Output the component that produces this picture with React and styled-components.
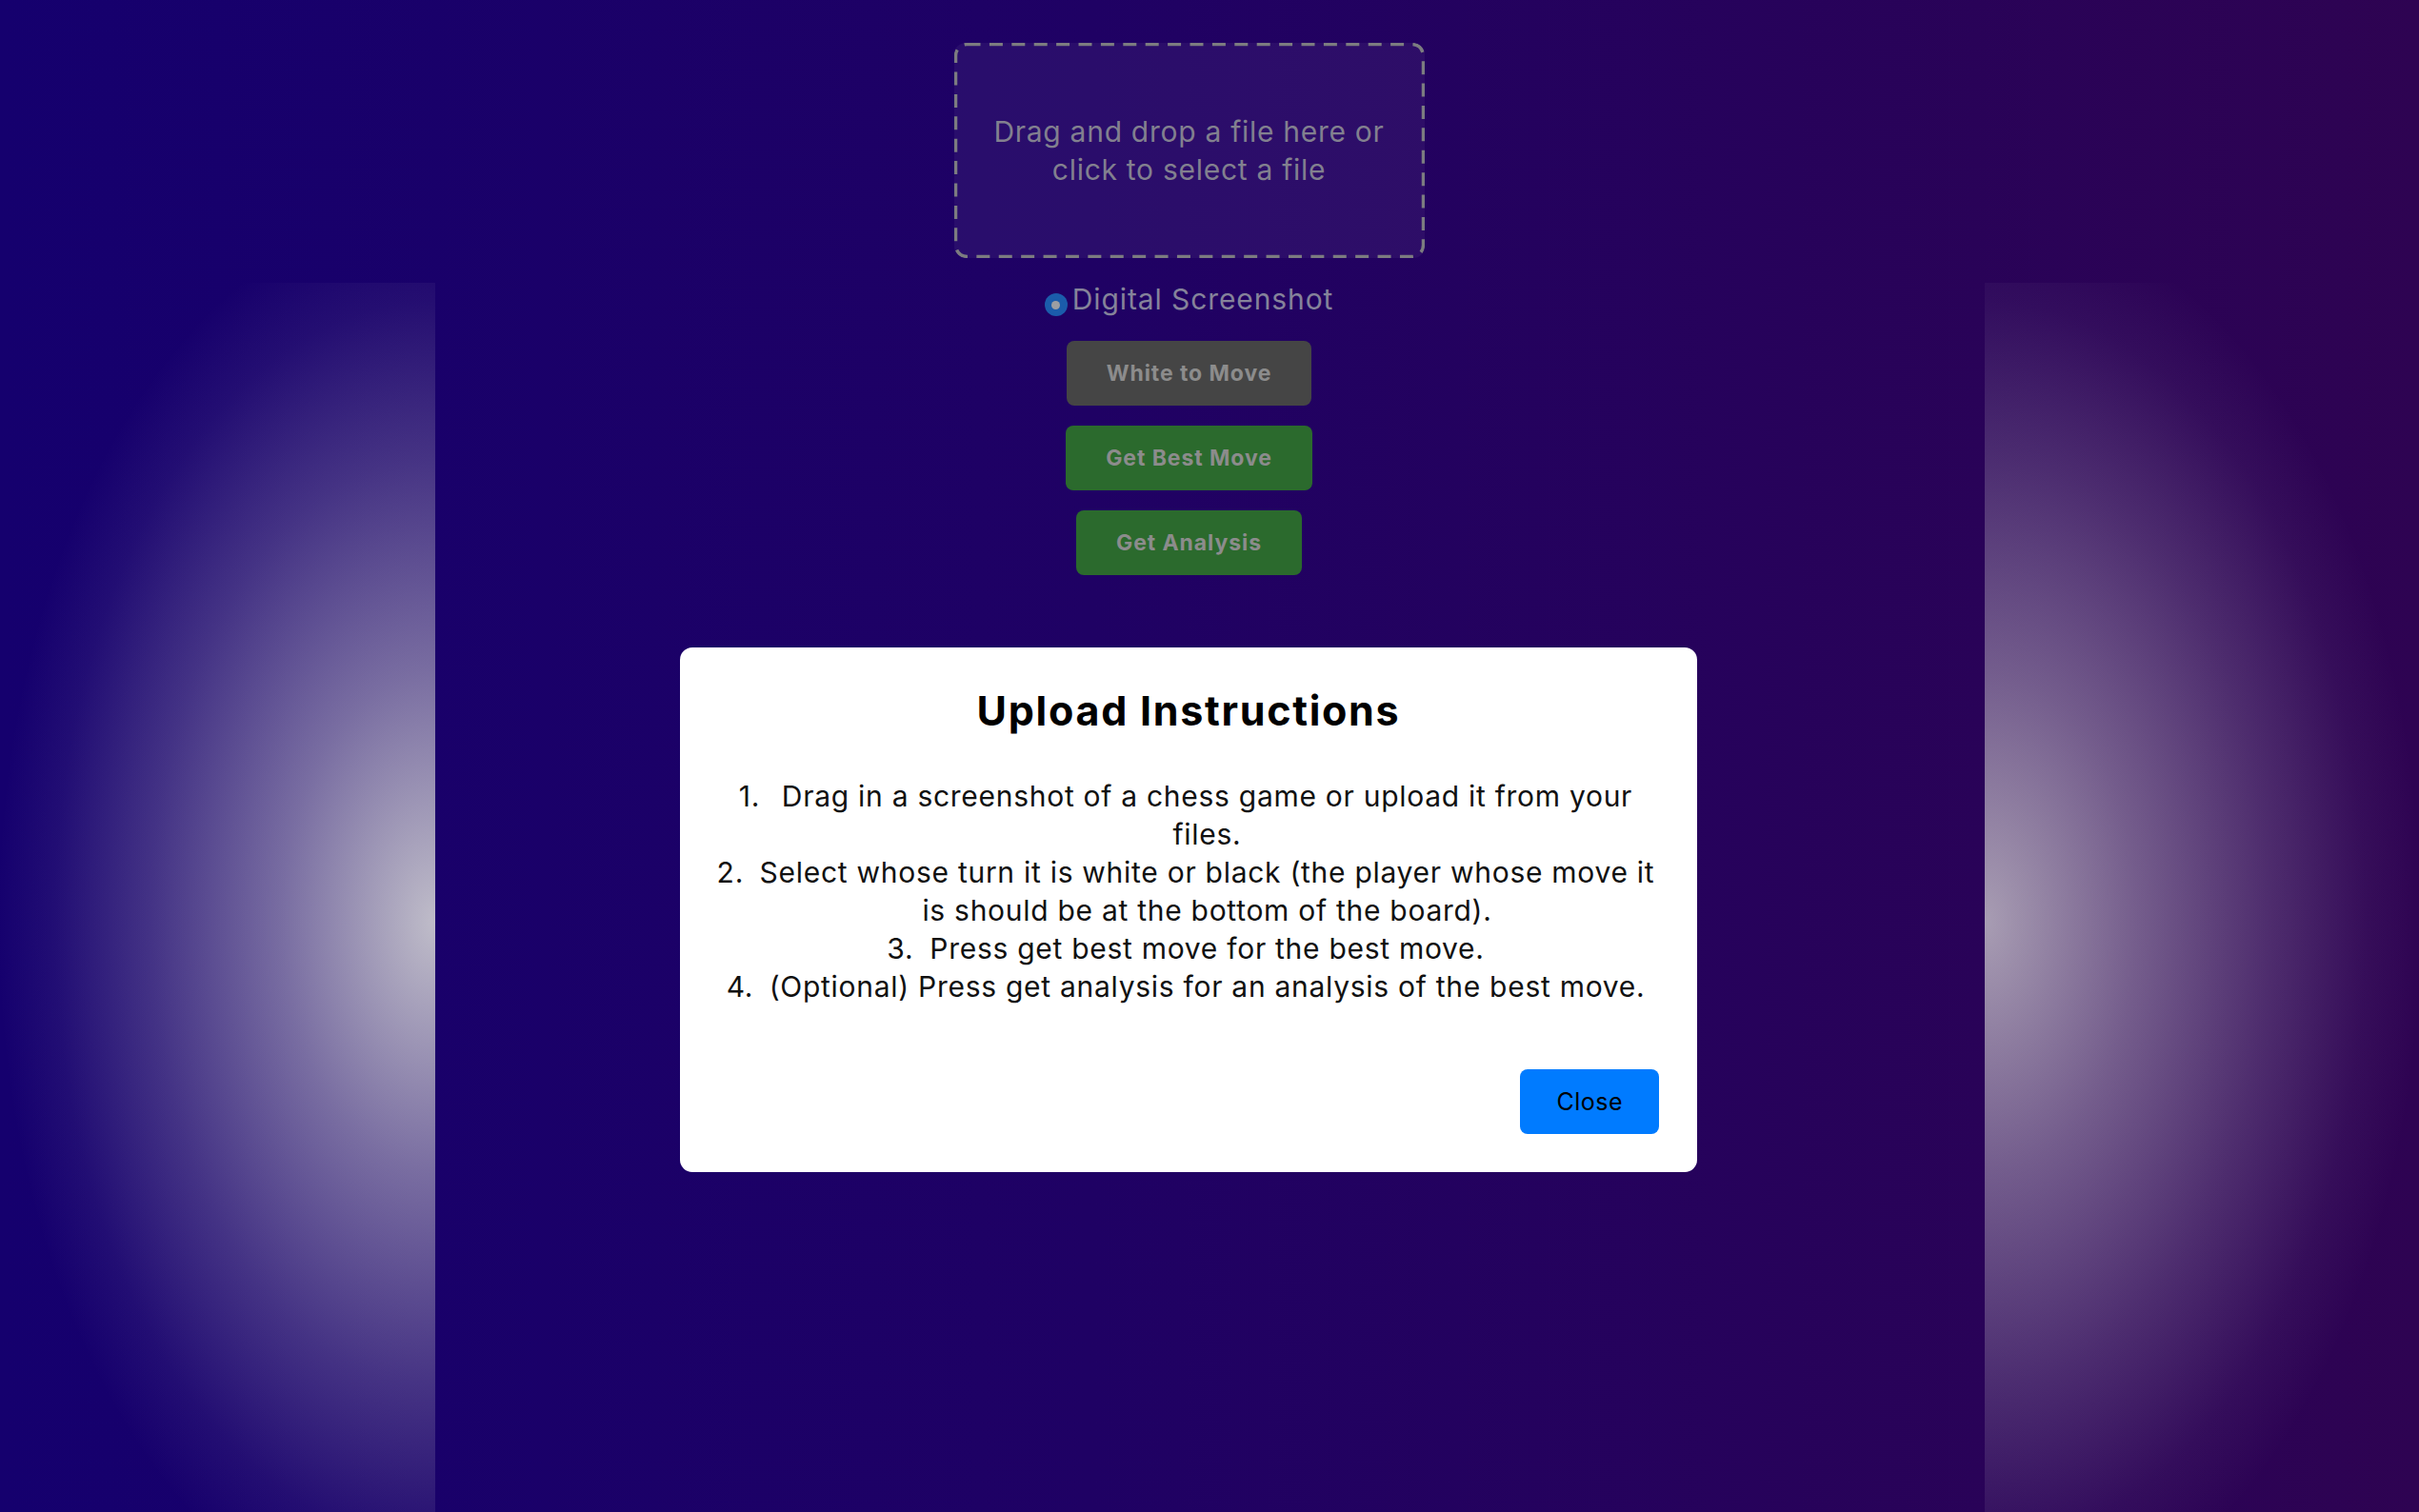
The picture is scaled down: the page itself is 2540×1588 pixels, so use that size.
import React from 'react';
import styled, { createGlobalStyle } from 'styled-components';

const GlobalStyle = createGlobalStyle`
  html, body {
    margin: 0;
    height: 100%;
  }

  body {
    font-family: Inter, "Noto Sans", sans-serif;
    letter-spacing: 0.045em;
    background: linear-gradient(90deg, #15006e 0%, #1f0164 45%, #2e0352 100%);
    overflow: hidden;
  }

  #root {
    height: 100%;
  }
`;

// dashed outline drawn to match the longer dashes of the original drop zone
const dashOutline =
  "url(\"data:image/svg+xml,%3Csvg xmlns='http://www.w3.org/2000/svg' width='494' height='226'%3E%3Crect x='1.5' y='1.5' width='491' height='223' rx='12' fill='none' stroke='%237c7c80' stroke-width='3.5' stroke-dasharray='14 9.4'/%3E%3C/svg%3E\")";

const Page = styled.div`
  display: grid;
  grid-template-columns: 457px 1fr 456px;
  height: 100vh;
`;

const SideGlow = styled.div`
  margin-top: 297px;
  background: radial-gradient(
    ellipse 460px 750px at ${(p) => (p.$side === 'left' ? '100%' : '0%')} 52%,
    rgba(228, 230, 222, ${(p) => p.$strength}) 0%,
    rgba(228, 230, 222, ${(p) => p.$strength * 0.58}) 35%,
    rgba(228, 230, 222, ${(p) => p.$strength * 0.27}) 65%,
    rgba(228, 230, 222, ${(p) => p.$strength * 0.07}) 87%,
    rgba(228, 230, 222, 0) 100%
  );
`;

const Main = styled.main`
  display: flex;
  flex-direction: column;
  align-items: center;
  padding: 45px 44px 0 0;
`;

const DropZone = styled.div`
  box-sizing: border-box;
  width: 494px;
  height: 226px;
  padding: 0 28px;
  display: flex;
  align-items: center;
  justify-content: center;
  text-align: center;
  border-radius: 12px;
  background: ${dashOutline}, rgba(255, 255, 255, 0.05);
  color: #82808f;
  font-size: 30px;
  line-height: 40px;
  cursor: pointer;
`;

const RadioRow = styled.label`
  display: flex;
  align-items: flex-end;
  gap: 5px;
  margin-top: 25px;
  color: #85839a;
  font-size: 30px;
  line-height: 36px;
  letter-spacing: 0.03em;
`;

const RadioDot = styled.span`
  box-sizing: border-box;
  width: 24px;
  height: 24px;
  border-radius: 50%;
  background: #1b5cab;
  display: flex;
  align-items: center;
  justify-content: center;

  &::after {
    content: '';
    width: 9px;
    height: 9px;
    border-radius: 50%;
    background: #9c9ea2;
  }
`;

const ButtonStack = styled.div`
  display: flex;
  flex-direction: column;
  align-items: center;
  gap: 21px;
  margin-top: 26px;
`;

const ActionButton = styled.button`
  height: 68px;
  padding: 0 42px;
  border: none;
  border-radius: 8px;
  background: ${(p) => (p.$variant === 'gray' ? '#454545' : '#2b6a2d')};
  color: #8c8c8c;
  font-family: Inter, "Noto Sans", sans-serif;
  font-size: 23px;
  font-weight: 700;
  letter-spacing: 0.04em;
  cursor: pointer;
`;

const Overlay = styled.div`
  position: fixed;
  top: 0;
  left: 0;
  right: 44px;
  bottom: 0;
  display: flex;
  justify-content: center;
  align-items: flex-start;
  padding-top: 680px;
  box-sizing: border-box;
`;

const Modal = styled.div`
  box-sizing: border-box;
  width: 1068px;
  padding: 40px;
  background: #fff;
  border-radius: 13px;
  color: #111;
`;

const Title = styled.h2`
  margin: 0 0 44px;
  text-align: center;
  font-size: 43px;
  line-height: 52px;
  font-weight: 700;
  letter-spacing: 0.04em;
  color: #000;
`;

const Steps = styled.ol`
  margin: 0;
  padding: 0 0 0 39px;
  list-style: none;
  counter-reset: step;
  text-align: center;
  font-size: 30px;
  line-height: 40px;
`;

// the number hangs left of the centred text, like the original's list marker
const Step = styled.li`
  counter-increment: step;

  &::before {
    content: counter(step) ".";
    display: inline-block;
    width: 45px;
    margin-left: -45px;
    text-align: left;
  }
`;

const Footer = styled.div`
  display: flex;
  justify-content: flex-end;
  margin-top: 67px;
`;

const CloseButton = styled.button`
  height: 68px;
  padding: 0 38px;
  border: none;
  border-radius: 8px;
  background: #007bff;
  color: #000;
  font-family: Inter, "Noto Sans", sans-serif;
  font-size: 25px;
  letter-spacing: 0.02em;
  cursor: pointer;
`;

const steps = [
  'Drag in a screenshot of a chess game or upload it from your files.',
  'Select whose turn it is white or black (the player whose move it is should be at the bottom of the board).',
  'Press get best move for the best move.',
  '(Optional) Press get analysis for an analysis of the best move.',
];

const App = () => {
  return (
    <>
      <GlobalStyle />
      <Page>
        <SideGlow $side="left" $strength={0.82} />
        <Main>
          <DropZone>Drag and drop a file here or click to select a file</DropZone>
          <RadioRow>
            <RadioDot />
            Digital Screenshot
          </RadioRow>
          <ButtonStack>
            <ActionButton $variant="gray">White to Move</ActionButton>
            <ActionButton>Get Best Move</ActionButton>
            <ActionButton>Get Analysis</ActionButton>
          </ButtonStack>
        </Main>
        <SideGlow $side="right" $strength={0.68} />
      </Page>
      <Overlay>
        <Modal>
          <Title>Upload Instructions</Title>
          <Steps>
            {steps.map((step, index) => (
              <Step key={index}>{step}</Step>
            ))}
          </Steps>
          <Footer>
            <CloseButton>Close</CloseButton>
          </Footer>
        </Modal>
      </Overlay>
    </>
  );
};

export default App;
